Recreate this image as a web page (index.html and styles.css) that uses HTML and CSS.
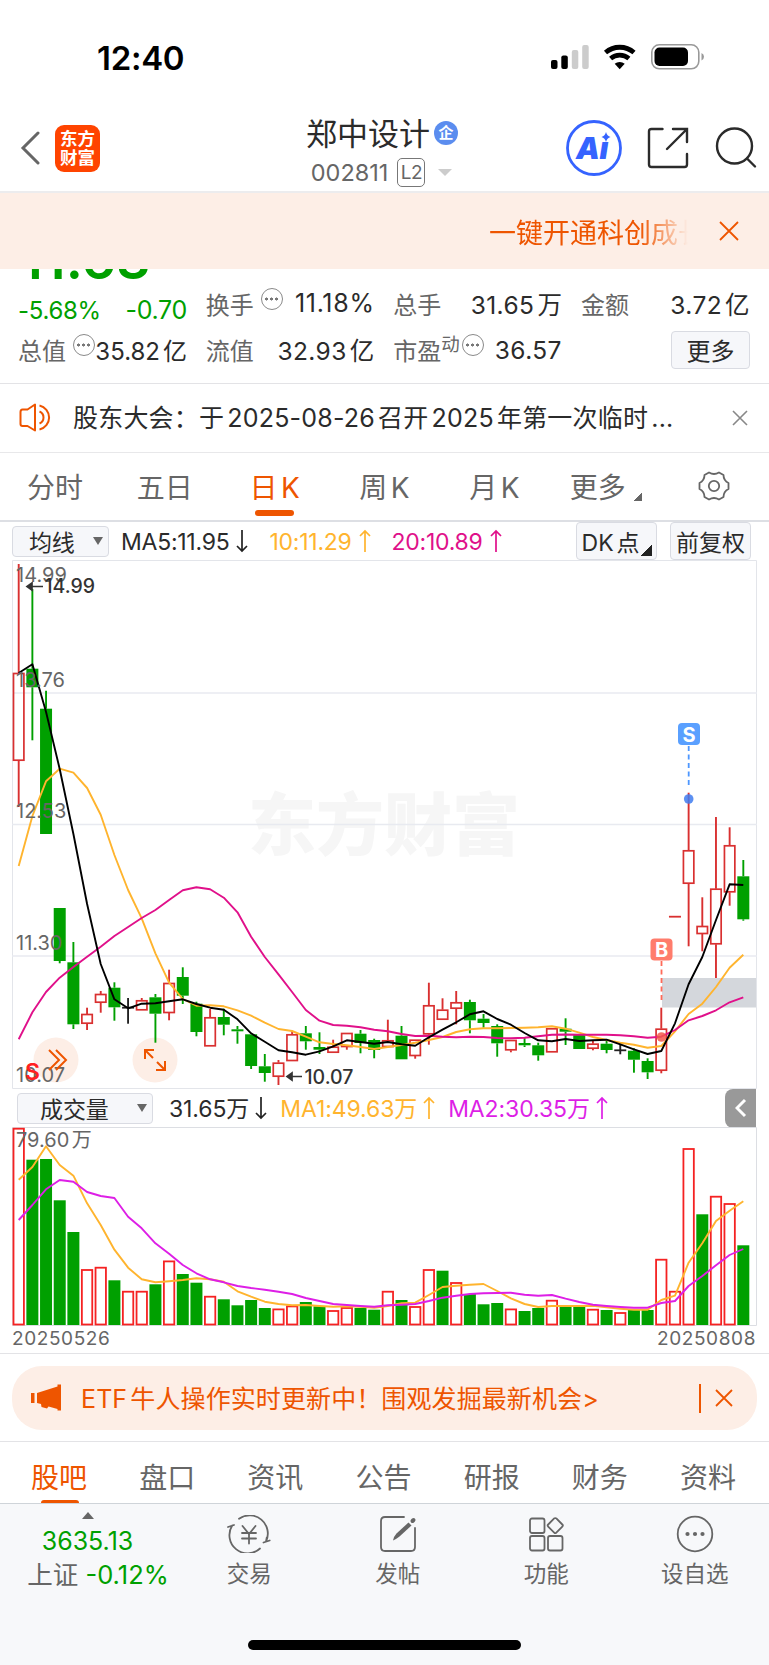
FILE: index.html
```html
<!DOCTYPE html>
<html lang="zh-CN">
<head>
    <meta charset="UTF-8">
    <title>郑中设计 002811</title>
    <link rel="stylesheet" href="styles.css">
</head>
<body>
    <div class="status-bar">
        <span class="time">12:40</span>
        <svg class="status-icons" width="154" height="28" viewBox="0 0 154 28">
            <rect x="0" y="17" width="6.5" height="9" rx="2"/>
            <rect x="10.3" y="12.500" width="6.500" height="13.500" rx="2"/>
            <rect x="20.8" y="7" width="6.500" height="19" rx="2" fill="#ccc"/>
            <rect x="31.2" y="2" width="6.500" height="24" rx="2" fill="#ccc"/>
            <path d="M54.500 9.500a22 22 0 0 1 28.500 0" fill="none" stroke="#000" stroke-width="4.800"/>
            <path d="M59.600 15.500a14 14 0 0 1 18.300 0" fill="none" stroke="#000" stroke-width="4.600"/>
            <path d="M63.700 20.800a7.500 7.500 0 0 1 10 0l-5 5.400z"/>
            <rect x="100.800" y="1.800" width="47" height="24" rx="7.500" fill="none" stroke="#999" stroke-width="1.600"/>
            <rect x="103.500" y="4.500" width="33.500" height="18.500" rx="5"/>
            <path d="M150.500 10v7.500q2.500-1 2.500-3.700t-2.500-3.800z" fill="#999"/>
        </svg>
    </div>

    <header class="header">
        <svg class="back" width="20" height="34" viewBox="0 0 20 34"><path d="M18 2L3 17l15 15" fill="none" stroke="#666" stroke-width="3" stroke-linecap="round"/></svg>
        <div class="logo"><span>东方</span><span>财富</span></div>
        <div class="title">
            <h1>郑中设计<i class="badge">企</i></h1>
            <p>002811<b class="level">L2</b><i class="caret"></i></p>
        </div>
        <svg class="ai" width="56" height="56" viewBox="0 0 56 56">
            <circle cx="28" cy="28" r="26.500" fill="none" stroke="#3563ff" stroke-width="2.800"/>
            <text x="10" y="38.500" class="ai-text">A</text>
            <text x="33.500" y="38.500" class="ai-text">ı</text>
            <path d="M40 12q1 4 4.500 5-3.500 1-4.500 5-1-4-4.500-5 3.500-1 4.500-5z" fill="#3563ff"/>
        </svg>
        <svg class="share" width="42" height="42" viewBox="0 0 42 42" fill="none" stroke="#2b2b2b" stroke-width="2.400" stroke-linecap="round">
            <path d="M15.500 2H4.500Q2 2 2 4.500v33Q2 40 4.500 40h33q2.500 0 2.500-2.500V27M26 2h14v13M40 2L20 22"/>
        </svg>
        <svg class="search" width="42" height="42" viewBox="0 0 42 42" fill="none" stroke="#2b2b2b" stroke-width="2.400" stroke-linecap="round">
            <circle cx="19.500" cy="19" r="17.500"/>
            <path d="M32 31.500l8 8"/>
        </svg>
    </header>

    <div class="banner">
        <span class="banner-text">一键开通科创成长</span>
        <svg width="20" height="20" viewBox="0 0 20 20"><path d="M1 1l18 18M19 1L1 19" stroke="#ee5500" stroke-width="1.800"/></svg>
    </div>

    <section class="quote">
        <div class="price">11.63</div>
        <div class="cells">
            <div class="cell change"><span>-5.68%</span><span>-0.70</span></div>
            <div class="cell turnover"><label>换手</label><i class="more"></i><span>11.18%</span></div>
            <div class="cell"><label>总手</label><span>31.65万</span></div>
            <div class="cell"><label>金额</label><span>3.72亿</span></div>
            <div class="cell tight"><label>总值</label><i class="more"></i><span>35.82亿</span></div>
            <div class="cell"><label>流值</label><span>32.93亿</span></div>
            <div class="cell pe"><label>市盈<sup>动</sup></label><i class="more"></i><span>36.57</span></div>
            <div class="cell last"><button class="btn-more">更多</button></div>
        </div>
    </section>

    <div class="notice">
        <svg width="34" height="30" viewBox="0 0 34 30" fill="none" stroke="#ee5500" stroke-width="2" stroke-linejoin="round">
            <path d="M16 1.500v26L8.500 23H3.500Q1.500 23 1.500 21V9q0-2.500 2-2.500H8.500z"/>
            <path d="M20.500 8.500a6.500 6.500 0 0 1 0 12M20.500 2.500a12.300 12.300 0 0 1 0 24"/>
        </svg>
        <span class="notice-text">股东大会：于2025-08-26召开2025年第一次临时...</span>
        <svg width="16" height="16" viewBox="0 0 16 16"><path d="M1 1l14 14M15 1L1 15" stroke="#888" stroke-width="1.600"/></svg>
    </div>

    <nav class="periods">
        <a>分时</a>
        <a>五日</a>
        <a class="active">日K</a>
        <a>周K</a>
        <a>月K</a>
        <a>更多<i class="corner"></i></a>
        <a>
            <svg width="32" height="30" viewBox="-16 -15 32 30" fill="none" stroke="#666" stroke-width="1.800" stroke-linejoin="round">
                <path d="M-5 -13.500Q0 -10.500 5 -13.500L9.500 -11Q9.500 -5.500 14.500 -3V3Q9.500 5.500 9.500 11L5 13.500Q0 10.500 -5 13.500L-9.500 11Q-9.500 5.500 -14.500 3V-3Q-9.500 -5.500 -9.500 -11Z"/>
                <circle r="5.200"/>
            </svg>
        </a>
    </nav>

    <div class="indicator">
        <div class="select">均线<i class="down"></i></div>
        <span class="ma5">MA5:11.95</span><svg class="arrow" viewBox="0 0 12 24"><path d="M6 1v21M1 17l5 5 5-5"/></svg>
        <span class="ma10">10:11.29</span><svg class="arrow ma10" viewBox="0 0 12 24"><path d="M6 23V2M1 7l5-5 5 5"/></svg>
        <span class="ma20">20:10.89</span><svg class="arrow ma20" viewBox="0 0 12 24"><path d="M6 23V2M1 7l5-5 5 5"/></svg>
        <button class="chip dk">DK点<i class="corner"></i></button>
        <button class="chip">前复权</button>
    </div>

    <svg class="chart" id="price-chart" width="769" height="529" viewBox="0 560 769 529"></svg>

    <div class="indicator volume">
        <div class="select">成交量<i class="down"></i></div>
        <span class="vol">31.65万</span><svg class="arrow" viewBox="0 0 12 24"><path d="M6 1v21M1 17l5 5 5-5"/></svg>
        <span class="ma10">MA1:49.63万</span><svg class="arrow ma10" viewBox="0 0 12 24"><path d="M6 23V2M1 7l5-5 5 5"/></svg>
        <span class="vma2">MA2:30.35万</span><svg class="arrow vma2" viewBox="0 0 12 24"><path d="M6 23V2M1 7l5-5 5 5"/></svg>
        <div class="drawer"><svg width="12" height="20" viewBox="0 0 12 20"><path d="M10 2L2 10l8 8" fill="none" stroke="#fff" stroke-width="3"/></svg></div>
    </div>

    <svg class="chart" id="volume-chart" width="769" height="199" viewBox="0 1127 769 199"></svg>

    <div class="dates"><span>20250526</span><span>20250808</span></div>

    <div class="promo-wrap">
        <div class="promo">
            <svg width="31" height="28" viewBox="0 0 31 28" fill="#ee5500">
                <path d="M0 9h3.500v10H0zM6 9L26.500 2.500V.5h3.500v26h-3.500v-1.500L17.500 22.500 16 24.500 10.500 23 10 20 6 19z"/>
            </svg>
            <span class="promo-text">ETF牛人操作实时更新中！围观发掘最新机会&gt;</span>
            <i class="sep"></i>
            <svg width="18" height="18" viewBox="0 0 18 18"><path d="M1 1l16 16M17 1L1 17" stroke="#ee5500" stroke-width="1.800"/></svg>
        </div>
    </div>

    <nav class="sections">
        <a class="active">股吧</a>
        <a>盘口</a>
        <a>资讯</a>
        <a>公告</a>
        <a>研报</a>
        <a>财务</a>
        <a>资料</a>
    </nav>

    <footer class="bottom">
        <div class="index">
            <i class="up"></i>
            <span class="green">3635.13</span>
            <span class="name">上证 <b class="green">-0.12%</b></span>
        </div>
        <div class="action">
            <svg width="44" height="38" viewBox="-22 -19 44 38" fill="none" stroke="#666" stroke-width="1.800" stroke-linecap="round">
                <path d="M-10 -15.200A18.200 18.200 0 0 1 17 7.500M11 14.500A18.200 18.200 0 0 1 -16.800 -8.500M-21 -7l6-2M14.500 8.500l6.200-2M17 7.500l.8-4"/>
                <path d="M-6.500 -8L0 0l6.500-8M0 0v9.500M-7 -1H7M-7 4.500H7"/>
            </svg>
            <span>交易</span>
        </div>
        <div class="action">
            <svg width="38" height="38" viewBox="0 0 38 38" fill="none" stroke="#666" stroke-width="1.800" stroke-linecap="round">
                <path d="M25 2H6Q2 2 2 6v26q0 4 4 4h26q4 0 4-4V13"/>
                <path d="M14 25.500q1-4.500 3.500-7l12-11 3 3-12 11q-3 2.500-6.500 4z" fill="#666" stroke="none"/>
                <path d="M33.500 6l1-1" stroke-width="4"/>
            </svg>
            <span>发帖</span>
        </div>
        <div class="action">
            <svg width="38" height="38" viewBox="0 0 38 38" fill="none" stroke="#666" stroke-width="1.800">
                <rect x="3" y="3.500" width="14.500" height="14.500" rx="2"/>
                <rect x="3" y="21" width="14.500" height="14.500" rx="2"/>
                <rect x="21" y="21" width="14.500" height="14.500" rx="2"/>
                <rect x="22.500" y="4.800" width="11.500" height="11.500" rx="1.500" transform="rotate(45 28.250 10.550)"/>
            </svg>
            <span>功能</span>
        </div>
        <div class="action">
            <svg width="38" height="38" viewBox="0 0 38 38">
                <circle cx="19" cy="19" r="17.300" fill="none" stroke="#666" stroke-width="1.800"/>
                <g fill="#666"><circle cx="11.500" cy="19" r="2.100"/><circle cx="19" cy="19" r="2.100"/><circle cx="26.500" cy="19" r="2.100"/></g>
            </svg>
            <span>设自选</span>
        </div>
        <i class="home"></i>
    </footer>

    <script src="chart.js"></script>
</body>
</html>
```
FILE: styles.css
```css
body {
    margin: 0;
    width: 769px;
    height: 1665px;
    overflow: hidden;
    background: #fff;
    color: #2b2b2b;
    font-family: Inter, "Noto Sans CJK SC", sans-serif;
    font-size: 24px;
    text-autospace: normal;
}

h1, p {
    margin: 0;
    font-weight: 400;
}

i, b {
    font-style: normal;
    font-weight: 400;
}

button {
    font: inherit;
    color: inherit;
    padding: 0;
}

svg {
    flex: none;
    display: block;
}

.status-bar {
    display: flex;
    justify-content: space-between;
    box-sizing: border-box;
    height: 112px;
    padding: 43px 64px 0 97px;
}

.time {
    font-size: 33px;
    font-weight: 600;
    line-height: 30px;
    color: #000;
    letter-spacing: -0.3px;
}

.header {
    display: flex;
    align-items: center;
    box-sizing: border-box;
    height: 81px;
    padding: 0 12px 7px 20px;
    border-bottom: 2px solid #ececee;
}

.logo {
    display: flex;
    flex-direction: column;
    justify-content: center;
    align-items: center;
    width: 47px;
    height: 47px;
    margin-left: 15px;
    border-radius: 9px;
    background: #ff4400;
    color: #fff;
    font-size: 17.5px;
    font-weight: 700;
    line-height: 19px;
}

.title {
    width: 180px;
    margin: 4px 0 0 190px;
    text-align: center;
}

.title h1 {
    display: flex;
    align-items: center;
    justify-content: center;
    height: 40px;
    margin-left: 11px;
    font-size: 31px;
    white-space: nowrap;
}

.badge {
    width: 24px;
    height: 24px;
    margin: 4px 0 0 4px;
    border-radius: 50%;
    background: #5b8def;
    color: #fff;
    font-size: 15px;
    font-weight: 700;
    line-height: 23px;
}

.title p {
    display: flex;
    align-items: center;
    justify-content: center;
    height: 34px;
    margin: 4px 0 0 10px;
    color: #666;
    font-size: 23.5px;
}

.level {
    box-sizing: border-box;
    width: 28px;
    height: 29px;
    margin-left: 9px;
    border: 1.5px solid #777;
    border-radius: 5px;
    font-size: 19px;
    line-height: 27px;
    letter-spacing: -0.5px;
}

.caret {
    margin-left: 13px;
    border: 7px solid transparent;
    border-top-color: #ccc;
    border-bottom: 0;
}

.ai {
    margin-left: 103px;
}

.ai-text {
    font-size: 30px;
    font-weight: 900;
    font-style: italic;
    fill: #3563ff;
}

.share {
    margin-left: 25px;
}

.search {
    margin-left: 26px;
}

.banner {
    display: flex;
    align-items: center;
    justify-content: flex-end;
    box-sizing: border-box;
    height: 76px;
    padding-right: 30px;
    background: #fdeee6;
    color: #ee5500;
}

.banner-text {
    width: 199px;
    margin-right: 31px;
    overflow: hidden;
    white-space: nowrap;
    font-size: 27px;
    -webkit-mask-image: linear-gradient(to right, #000 76%, transparent);
    mask-image: linear-gradient(to right, #000 76%, transparent);
}

.quote {
    box-sizing: border-box;
    height: 115px;
    overflow: hidden;
    padding: 0 19px;
    border-bottom: 1px solid #e3e3e6;
}

.price {
    height: 11px;
    margin: -51px 0 0 1px;
    padding-bottom: 51px;
    font-size: 54px;
    font-weight: 600;
    line-height: 83px;
    color: #00a000;
}

.cells {
    display: grid;
    grid-template-columns: repeat(4, 169px);
    grid-template-rows: 46px 47px;
    justify-content: space-between;
    margin: 0 0 0 -1px;
}

.cell {
    display: flex;
    align-items: center;
    justify-content: space-between;
    white-space: nowrap;
}

.cell label {
    color: #666;
}

.cell span {
    font-size: 24.5px;
    letter-spacing: 0.4px;
}

.cell.turnover span {
    font-size: 25px;
    letter-spacing: 0.7px;
}

.change {
    padding-top: 14px;
    color: #00a000;
}

.cell.change span {
    font-size: 24px;
    letter-spacing: -0.3px;
}

.cell.change span + span {
    font-size: 25px;
}

.more {
    box-sizing: border-box;
    width: 22px;
    height: 22px;
    margin: -9px auto 0 7px;
    border: 1.6px solid #8a8a8a;
    border-radius: 50%;
    background: radial-gradient(circle at 9.5px 50%, #777 1.3px, transparent 1.8px),
        radial-gradient(circle at 4.5px 50%, #777 1.3px, transparent 1.8px),
        radial-gradient(circle at 14.5px 50%, #777 1.3px, transparent 1.8px);
}

.cell.tight span {
    font-size: 24px;
    letter-spacing: 0;
}

.pe {
    justify-content: flex-start;
}

.pe sup {
    font-size: 18.5px;
    line-height: 0;
}

.pe .more {
    margin: -9px 11px 0 2px;
}

.last {
    justify-content: flex-end;
}

.btn-more {
    width: 79px;
    height: 38px;
    border: 1px solid #d9dbe2;
    border-radius: 4px;
    background: #f6f7fa;
}

.notice {
    display: flex;
    align-items: center;
    box-sizing: border-box;
    height: 69px;
    padding: 0 21px 0 19px;
    border-bottom: 1px solid #e8e8ea;
}

.notice-text {
    flex: 1;
    margin: -5px 0 0 20px;
    font-size: 25px;
    letter-spacing: 0.2px;
    white-space: nowrap;
}

.periods {
    display: grid;
    grid-template-columns: repeat(7, 1fr);
    box-sizing: border-box;
    height: 69px;
    padding-bottom: 1px;
    border-bottom: 2px solid #dddfe4;
    font-size: 28px;
    color: #666;
}

.periods a {
    position: relative;
    display: flex;
    align-items: center;
    justify-content: center;
}

.periods .active,
.sections .active {
    color: #ee5500;
}

.periods .active::after {
    content: "";
    position: absolute;
    left: 35px;
    bottom: 3px;
    width: 39px;
    height: 6px;
    border-radius: 3px;
    background: #ee5500;
}

.corner {
    width: 8px;
    height: 8px;
    background: linear-gradient(135deg, transparent 50%, #666 50%);
}

.periods .corner {
    margin: 22px -3px 0 8px;
}

.indicator {
    display: flex;
    align-items: center;
    height: 38px;
    padding: 0 18px 0 12px;
    font-size: 23px;
    letter-spacing: -0.25px;
    white-space: nowrap;
}

.indicator span {
    padding-top: 1px;
}

.select {
    display: flex;
    align-items: center;
    justify-content: space-between;
    box-sizing: border-box;
    width: 97px;
    height: 31px;
    margin-right: 12px;
    padding: 0 5px 0 16px;
    border: 1px solid #d9dbe2;
    border-radius: 4px;
    background: #f6f7fa;
}

.down {
    border: 5px solid transparent;
    border-top: 8px solid #666;
    border-bottom: 0;
}

.arrow {
    width: 12px;
    height: 24px;
    margin: 0 21px 0 7px;
    fill: none;
    stroke: #222;
    stroke-width: 1.7;
}

.ma10 {
    color: #ffb42e;
    stroke: #ffb42e;
}

.ma20 {
    color: #e0108a;
    stroke: #e0108a;
}

.vma2 {
    color: #dd1fe6;
    stroke: #dd1fe6;
}

span.ma10, span.ma20, span.vma2 {
    stroke: none;
}

.chip {
    position: relative;
    box-sizing: border-box;
    width: 81px;
    height: 38px;
    margin-left: 13px;
    border: 1px solid #d9dbe2;
    border-radius: 4px;
    background: #f6f7fa;
}

.dk {
    margin-left: auto;
    padding-right: 12px;
}

.dk .corner {
    position: absolute;
    right: 4px;
    bottom: 3px;
    width: 11px;
    height: 11px;
    background: linear-gradient(135deg, transparent 50%, #222 50%);
}

.volume {
    padding: 0 13px 0 17px;
    letter-spacing: -0.1px;
    text-autospace: no-autospace;
}

.volume span {
    margin-top: -3px;
}

.volume .select {
    width: 136px;
    margin-right: 16px;
    padding-left: 22px;
}

.volume .arrow {
    margin: 0 13px 0 6px;
}

.drawer {
    display: flex;
    align-items: center;
    justify-content: center;
    width: 31px;
    height: 39px;
    margin-left: auto;
    border-radius: 8px 0 0 8px;
    background: #999;
}

.axis {
    font-size: 20px;
    fill: #666;
}

.mark {
    font-size: 19.5px;
    font-weight: 500;
    fill: #333;
}

.watermark {
    font-size: 68px;
    font-weight: 900;
    fill: #f6f6f6;
}

.flag {
    font-size: 20px;
    font-weight: 700;
    fill: #fff;
    text-anchor: middle;
}

.s-note {
    font-size: 23px;
    font-weight: 600;
    fill: #ff2020;
}

.dates {
    display: flex;
    justify-content: space-between;
    box-sizing: border-box;
    height: 28px;
    padding: 0 13px 0 12px;
    border-bottom: 1px solid #e3e3e6;
    font-size: 19px;
    line-height: 25px;
    letter-spacing: 0.6px;
    color: #666;
}

.promo-wrap {
    box-sizing: border-box;
    height: 88px;
    padding: 12px;
    border-bottom: 1px solid #e3e3e6;
}

.promo {
    display: flex;
    align-items: center;
    box-sizing: border-box;
    height: 64px;
    padding: 0 24px 0 19px;
    border-radius: 30px;
    background: #fdeee6;
    color: #ee5500;
    font-size: 25px;
}

.promo-text {
    flex: 1;
    margin: -2px 0 0 19px;
    letter-spacing: 0.1px;
    white-space: nowrap;
}

.sep {
    width: 2px;
    height: 29px;
    margin-right: 14px;
    background: #ee5500;
}

.sections {
    display: grid;
    grid-template-columns: repeat(7, 1fr);
    box-sizing: border-box;
    height: 62px;
    padding: 0 7px 0 5px;
    border-bottom: 1px solid #cfd4d9;
    font-size: 28px;
    line-height: 72px;
    text-align: center;
    color: #666;
}

.sections a {
    position: relative;
    height: 61px;
}

.sections .active::after {
    content: "";
    position: absolute;
    left: 36px;
    bottom: 0;
    width: 38px;
    height: 3px;
    border-radius: 3px 3px 0 0;
    background: #ee5500;
}

.bottom {
    position: relative;
    display: grid;
    grid-template-columns: 175px repeat(4, 148.5px);
    height: 162px;
    background: #f7f8fa;
    color: #666;
}

.index {
    display: flex;
    flex-direction: column;
    align-items: center;
    padding-top: 8px;
    font-size: 25px;
    line-height: 34px;
    white-space: nowrap;
}

.index span {
    margin-top: 5px;
}

.index .name {
    margin: 0 0 0 21px;
    font-size: 25.5px;
}

.up {
    border: 6.5px solid transparent;
    border-bottom: 7px solid #666;
    border-top: 0;
}

.green {
    color: #00a000;
}

.action {
    display: flex;
    flex-direction: column;
    align-items: center;
    padding-top: 11px;
    font-size: 22.5px;
    line-height: 41px;
}

.home {
    position: absolute;
    left: 248px;
    bottom: 16px;
    width: 273px;
    height: 10px;
    border-radius: 5px;
    background: #000;
}
```
FILE: chart.js
```js
// [type, high, body top, body bottom, low, volume top]
// r = up, g = down, d = unchanged
const days = [
    ['r', 564, 673, 760.7, 807, 1128], ['g', 589, 668.7, 687.3, 740.3, 1159.7], ['g', 690.7, 708.7, 834, 834, 1159],
    ['g', 908, 908, 961, 963.3, 1200.3], ['g', 942, 962.3, 1024.3, 1029, 1232], ['r', 1007.7, 1014, 1023.7, 1030, 1269.3],
    ['r', 991, 994, 1002.7, 1012.7, 1267], ['g', 982.3, 987.7, 1007.3, 1020.7, 1280.3], ['d', 998, 1007.7, 1008.2, 1023.7, 1291],
    ['r', 998, 1000.3, 1010.3, 1010.3, 1291], ['g', 994, 997.3, 1013.7, 1042.7, 1284.3], ['r', 969.7, 983, 1013, 1020.3, 1260.7],
    ['g', 967.3, 977, 995.7, 1004, 1274], ['g', 1001.7, 1003.7, 1032, 1036.3, 1282.7], ['r', 1009, 1017.3, 1046.3, 1046.3, 1296],
    ['g', 1008.7, 1017, 1024.7, 1035.3, 1299.3], ['g', 1026, 1029.3, 1031.3, 1043.7, 1305.3], ['g', 1034.3, 1034.3, 1066, 1069, 1300],
    ['g', 1054, 1066.3, 1073, 1081.7, 1308], ['r', 1060, 1062.7, 1076.7, 1085, 1308.7], ['r', 1030.7, 1034.3, 1061, 1061, 1305.7],
    ['g', 1026, 1033.3, 1041.3, 1049.7, 1302], ['g', 1032.3, 1047, 1049.7, 1054, 1306.3], ['r', 1039.7, 1046.7, 1052.7, 1052.7, 1310.3],
    ['r', 1033, 1033, 1047, 1049.7, 1307.3], ['g', 1030, 1033.7, 1043, 1053.3, 1308], ['g', 1038.7, 1040, 1050, 1058.3, 1309.7],
    ['r', 1019.7, 1040.3, 1047, 1047, 1291], ['g', 1026, 1035.7, 1059.3, 1059.3, 1300], ['r', 1039.7, 1039.7, 1056, 1058.7, 1306.3],
    ['r', 982.7, 1005.3, 1034.3, 1044.7, 1269.3], ['r', 998.3, 1009.7, 1019.7, 1019.7, 1270.7], ['r', 991, 1002.3, 1008.7, 1024.3, 1282.3],
    ['g', 999.7, 1002, 1020.3, 1033.3, 1294], ['g', 1014, 1018.7, 1023, 1027.7, 1304.3], ['g', 1024.3, 1026, 1043.3, 1056.7, 1303],
    ['r', 1040, 1040, 1050.3, 1052.3, 1308.7], ['g', 1037.3, 1043, 1045.3, 1047, 1311], ['g', 1042.7, 1045.3, 1055.3, 1060.7, 1308],
    ['r', 1028.3, 1028.3, 1052.3, 1052.3, 1300], ['g', 1018.3, 1028.7, 1031.7, 1045, 1305], ['g', 1034.3, 1034.3, 1049, 1049, 1306],
    ['r', 1040.7, 1043.7, 1048.7, 1050.3, 1309], ['g', 1039, 1043.7, 1050, 1053.3, 1310], ['d', 1044.7, 1050.3, 1050.8, 1054.3, 1312.3],
    ['g', 1048.3, 1050.7, 1059.7, 1072.7, 1310], ['g', 1058.3, 1061, 1072.3, 1079, 1310], ['r', 1007.7, 1028.7, 1070.7, 1073.3, 1259],
    ['r', 916.7, 916.7, 916.7, 916.7, 1291], ['r', 792.7, 850.3, 883.7, 946.3, 1148.3], ['r', 897.3, 926, 934, 951.3, 1214.3],
    ['r', 817, 888.7, 944.3, 978, 1196], ['r', 827.3, 845.3, 892.3, 905.7, 1203.3], ['g', 860, 876.3, 919.3, 920.7, 1245.3]
];
// volume bars whose colour differs from the candle
const volumeColor = { 8: 'r', 31: 'g', 44: 'r', 50: 'g' };

const ma5 = [673, 664.3, 711.7, 769, 834, 904, 964, 999.3, 1008.3, 1003.7, 1003.3, 1001.3, 999.3, 1004, 1007.7, 1009.7, 1019.3, 1033.3, 1041.7, 1050.3, 1052.3, 1054.7, 1051.3, 1046.3, 1040.3, 1042, 1043.7, 1042, 1044.3, 1045.7, 1037.3, 1029.7, 1022.3, 1014.3, 1011.3, 1019, 1024.7, 1033, 1040.3, 1041.3, 1039, 1041, 1040.3, 1039.7, 1044.3, 1049.3, 1054, 1051, 1023.3, 984.3, 957, 920, 884.3, 885];
const ma10 = [866, 816, 781.3, 768.7, 772.7, 788, 814.7, 855, 890, 918.3, 953.3, 982.7, 999, 1005.7, 1005.3, 1006.3, 1010.3, 1015.7, 1022.7, 1029, 1031, 1036.7, 1042.3, 1044, 1045.3, 1047, 1049, 1047, 1045, 1042.7, 1040, 1037, 1032, 1029.3, 1028.3, 1028.3, 1028, 1027.7, 1027.3, 1026.3, 1028.7, 1032.7, 1037, 1040, 1042.7, 1044.7, 1047.7, 1046, 1031.3, 1014, 1003.7, 987, 967.7, 954.7];
const ma20 = [1039.3, 1012.3, 992, 977.7, 967, 956.7, 946.7, 936, 927, 918, 910, 900, 890.3, 887.3, 889.3, 897.7, 912.3, 936.7, 957, 974.3, 992, 1010, 1020.7, 1025, 1025.7, 1027.3, 1029.7, 1031.3, 1034, 1036, 1035.7, 1036.7, 1037.3, 1036.7, 1037, 1038, 1038.3, 1037.7, 1036.3, 1034.7, 1034.5, 1034.7, 1034.7, 1034.7, 1035.3, 1036.3, 1037.7, 1036.7, 1030, 1020.3, 1016, 1010.3, 1002.3, 997.3];
const vma1 = [1179.7, 1167, 1146.3, 1165, 1175.7, 1203.3, 1225, 1249.7, 1267.7, 1279.3, 1282.3, 1281.3, 1280, 1278.3, 1279.3, 1281.7, 1291.3, 1296.7, 1301.7, 1304, 1305.3, 1305, 1306, 1306.7, 1306.3, 1306.7, 1307.7, 1306, 1303.3, 1302.7, 1295, 1287, 1285.7, 1284.7, 1284, 1291, 1298.3, 1304, 1307, 1306, 1306, 1306, 1305.7, 1307.3, 1308.7, 1309.7, 1309.7, 1300, 1295.7, 1262.7, 1243.3, 1221, 1210.7, 1201.3];
const vma2 = [1220, 1205, 1189.3, 1180, 1181.7, 1192, 1196, 1198, 1216.7, 1228.3, 1243.3, 1253.7, 1265, 1273.3, 1279.3, 1282.3, 1286, 1288, 1289.7, 1291.7, 1294, 1298, 1301, 1304, 1305, 1306, 1306.7, 1305.3, 1304.7, 1304, 1301, 1297.7, 1295.7, 1294, 1293.3, 1293, 1292.7, 1294.7, 1295.7, 1295, 1298.7, 1302, 1304.7, 1306, 1307, 1307.7, 1307.7, 1303, 1301, 1286, 1276, 1265.3, 1255, 1249];

const GREEN = '#00a000';
const colors = { r: '#d93030', g: GREEN, d: '#222' };
const x = i => 18.7 + i * 13.672;

function line(points, color, width) {
    const d = points.map((y, i) => `${x(i).toFixed(1)},${y}`).join(' ');
    return `<polyline points="${d}" fill="none" stroke="${color}" stroke-width="${width}" stroke-linejoin="round"/>`;
}

function vline(cx, y1, y2, color) {
    return y2 > y1 ? `<path d="M${cx} ${y1}V${y2}" stroke="${color}" stroke-width="1.9"/>` : '';
}

function candle([type, high, top, bottom, low], i) {
    const cx = x(i);
    const c = colors[type];
    if (type === 'd' || top === bottom) {
        return vline(cx, high, low, c) + `<path d="M${cx - 6} ${top}h12" stroke="${c}" stroke-width="1.8"/>`;
    }
    const wicks = vline(cx, high, top, c) + vline(cx, bottom, low, c);
    if (type === 'g') {
        return wicks + `<rect x="${cx - 6}" y="${top}" width="12" height="${bottom - top}" fill="${c}"/>`;
    }
    return wicks + `<rect x="${cx - 5.2}" y="${top + 0.5}" width="10.4" height="${bottom - top - 1}" fill="none" stroke="${c}" stroke-width="1.7"/>`;
}

function volumeBar(day, i) {
    const type = volumeColor[i] || day[0];
    const top = day[5];
    if (type === 'g') {
        return `<rect x="${x(i) - 6}" y="${top}" width="12" height="${1325 - top}" fill="${GREEN}"/>`;
    }
    return `<rect x="${x(i) - 5.2}" y="${top + 0.7}" width="10.4" height="${1323.8 - top}" fill="none" stroke="#f52222" stroke-width="1.8"/>`;
}

const grid = [693, 824.5, 956].map(y => `<path d="M12 ${y}H757" stroke="#e8eaf0" stroke-width="1.5"/>`).join('');
const labels = [['14.99', 582], ['13.76', 687], ['12.53', 818], ['11.30', 950], ['10.07', 1082]]
    .map(([t, y]) => `<text class="axis" x="16" y="${y}">${t}</text>`).join('');

document.getElementById('price-chart').innerHTML = `
    <path d="M12.500 1088.500V560.500H756.500V1088.500Z" fill="none" stroke="#e3e5ea"/>
    <text class="watermark" x="248" y="850">东方财富</text>
    ${grid}
    <rect x="662" y="978" width="94" height="29.500" fill="#d4d7dc"/>
    <circle cx="56" cy="1060" r="22.500" fill="#fdeee6"/>
    <circle cx="155" cy="1060" r="22.500" fill="#fdeee6"/>
    ${days.map(candle).join('')}
    ${line(ma10, '#ffb42e', 1.9)}
    ${line(ma20, '#e0108a', 1.9)}
    ${line(ma5, '#000', 1.9)}
    ${labels}
    <path d="M49 1050l10 10-10 10M56 1050l10 10-10 10" fill="none" stroke="#ee5500" stroke-width="2"/>
    <path d="M153 1058l-8-8M145 1059v-9h9M157 1062l8 8M165 1061v9h-9" fill="none" stroke="#ee5500" stroke-width="2"/>
    <text class="s-note" x="25" y="1080">S</text>
    <path d="M43 586.500H28M32 583l-5 3.500 5 3.500z" stroke="#333" stroke-width="1.700" fill="#333"/>
    <text class="mark" x="44.500" y="593">14.99</text>
    <path d="M302 1076.500H288M292 1073l-5 3.500 5 3.500z" stroke="#333" stroke-width="1.700" fill="#333"/>
    <text class="mark" x="304.500" y="1084">10.07</text>
    <path d="M688.700 746V787" stroke="#4e97ff" stroke-width="1.800" stroke-dasharray="5 3.500"/>
    <circle cx="688.700" cy="799" r="4.800" fill="#3f7df0" fill-opacity=".85"/>
    <rect x="678" y="723" width="22" height="22" rx="4" fill="#5aa0ff"/>
    <text class="flag" x="689" y="741.500">S</text>
    <path d="M661.500 961V1003" stroke="#ff6a58" stroke-width="1.800" stroke-dasharray="5 3.500"/>
    <circle cx="661.500" cy="1037" r="4.800" fill="#f2594b" fill-opacity=".85"/>
    <rect x="650.500" y="938.500" width="22" height="22" rx="4" fill="#ff7c6c"/>
    <text class="flag" x="661.500" y="957">B</text>`;

document.getElementById('volume-chart').innerHTML = `
    <path d="M12.500 1325.500V1127.500H756.500V1325.500Z" fill="none" stroke="#dcdee3"/>
    ${days.map(volumeBar).join('')}
    ${line(vma1, '#ffb42e', 1.9)}
    ${line(vma2, '#dd1fe6', 1.9)}
    <text class="axis" x="16" y="1147">79.60万</text>`;
```
